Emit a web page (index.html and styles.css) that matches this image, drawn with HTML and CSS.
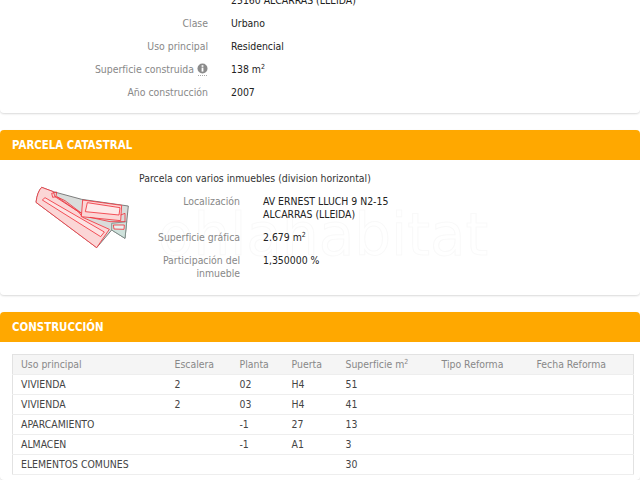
FILE: index.html
```html
<!DOCTYPE html>
<html lang="es">
<head>
<meta charset="utf-8">
<title>Ficha catastral</title>
<link rel="stylesheet" href="styles.css">
</head>
<body>
<main class="page">
  <section class="card first">
    <dl class="rows">
      <div class="row"><dt></dt><dd>25160 ALCARRAS (LLEIDA)</dd></div>
      <div class="row"><dt>Clase</dt><dd>Urbano</dd></div>
      <div class="row"><dt>Uso principal</dt><dd>Residencial</dd></div>
      <div class="row"><dt>Superficie construida <svg class="info" width="11" height="13" viewBox="0 0 11 13"><circle cx="5.5" cy="5.5" r="5" fill="#8b8b8b"/><rect x="4.6" y="4.6" width="1.8" height="4" fill="#fff"/><rect x="4.6" y="2.2" width="1.8" height="1.6" fill="#fff"/><path d="M1 12.5h9" stroke="#aaa" stroke-dasharray="1 1"/></svg></dt><dd>138 m<sup>2</sup></dd></div>
      <div class="row"><dt>Año construcción</dt><dd>2007</dd></div>
    </dl>
  </section>

  <section class="card">
    <h2 class="head">PARCELA CATASTRAL</h2>
    <div class="parcel">
      <span class="mark">ohlahabitat</span>
      <svg class="plot" width="129" height="90" viewBox="0 0 387 270">
        <g stroke-width="2.5" stroke-linejoin="round">
          <path d="M95 52 L130 65 L215 88 L355 108 L345 205 L305 180 L260 233 L78 97 Q82 65 95 52Z" fill="#d9dcda" stroke="#666"/>
          <path d="M305 160 L350 155 L345 205 L305 180Z" fill="#cfe2dc" stroke="#7a8a86"/>
          <path d="M95 52 L130 65 L135 80 L205 125 L218 142 L298 178 L260 233 L78 97 Q82 65 95 52Z" fill="#fbd6d6" stroke="#f0323c"/>
          <path d="M97 90 L105 83 L283 186 L272 200Z" fill="#fde3e3" stroke="#f0323c"/>
          <path d="M125 70 L140 66 L138 80 L128 82Z" fill="none" stroke="#f0323c"/>
          <path d="M140 80 L165 92 L215 130 L205 125Z" fill="none" stroke="#f0323c"/>
          <path d="M218 90 L335 106 L332 152 L214 140Z" fill="#fbd6d6" stroke="#f0323c"/>
          <path d="M232 98 L330 113 L327 135 L226 125Z" fill="#fde9e9" stroke="#f0323c"/>
          <path d="M240 142 L300 155 L345 155 L345 130 L332 135" fill="none" stroke="#f0323c"/>
          <path d="M310 165 L343 165 L342 178 L312 177Z" fill="#e6f3f1" stroke="#f0323c"/>
        </g>
      </svg>
      <div class="parcel-info">
        <p class="lead">Parcela con varios inmuebles (division horizontal)</p>
        <dl class="rows tight">
          <div class="row"><dt>Localización</dt><dd>AV ERNEST LLUCH 9 N2-15<br>ALCARRAS (LLEIDA)</dd></div>
          <div class="row"><dt>Superficie gráfica</dt><dd>2.679 m<sup>2</sup></dd></div>
          <div class="row"><dt>Participación del inmueble</dt><dd>1,350000 %</dd></div>
        </dl>
      </div>
    </div>
  </section>

  <section class="card">
    <h2 class="head">CONSTRUCCIÓN</h2>
    <div class="table-wrap">
      <table>
        <colgroup><col class="c1"><col class="c2"><col class="c3"><col class="c4"><col class="c5"><col class="c6"><col class="c7"></colgroup>
        <thead><tr><th>Uso principal</th><th>Escalera</th><th>Planta</th><th>Puerta</th><th>Superficie m<sup>2</sup></th><th>Tipo Reforma</th><th>Fecha Reforma</th></tr></thead>
        <tbody>
          <tr><td>VIVIENDA</td><td>2</td><td>02</td><td>H4</td><td>51</td><td></td><td></td></tr>
          <tr><td>VIVIENDA</td><td>2</td><td>03</td><td>H4</td><td>41</td><td></td><td></td></tr>
          <tr><td>APARCAMIENTO</td><td></td><td>-1</td><td>27</td><td>13</td><td></td><td></td></tr>
          <tr><td>ALMACEN</td><td></td><td>-1</td><td>A1</td><td>3</td><td></td><td></td></tr>
          <tr><td>ELEMENTOS COMUNES</td><td></td><td></td><td></td><td>30</td><td></td><td></td></tr>
        </tbody>
      </table>
    </div>
  </section>
</main>
</body>
</html>
```
FILE: styles.css
```css
html, body { margin: 0; padding: 0; height: 480px; overflow: hidden; background: #fff; }
body { font-family: "DejaVu Sans", sans-serif; font-stretch: condensed; font-size: 10.4px; color: #333; }
.page { display: flex; flex-direction: column; gap: 17px; margin-top: -11px; }
.card { background: #fff; border-radius: 4px; box-shadow: 0 1px 2px rgba(0,0,0,.15); }
.first { padding-bottom: 9px; }
.rows { margin: 0; display: flex; flex-direction: column; }
.row { display: flex; gap: 23px; height: 23px; line-height: 23px; }
.row dt { width: 208px; text-align: right; color: #888; flex: none; }
.row dd { margin: 0; color: #222; }
sup { font-size: 7px; line-height: 0; vertical-align: 4px; }
.info { vertical-align: -3px; }
.head { margin: 0; height: 30px; line-height: 30px; padding-left: 12px; background: #ffa800; color: #fff; font-size: 11.4px; font-weight: bold; border-radius: 4px 4px 0 0; }
.parcel { position: relative; display: flex; height: 135px; }
.mark { position: absolute; left: 158px; top: 40px; font-size: 58px; line-height: 70px; font-stretch: normal; color: #fff; -webkit-text-stroke: 1px #f9f9f9; }
.plot { flex: none; margin: 10px 0 0 10px; }
.parcel-info { position: relative; }
.lead { margin: 12px 0 0; line-height: 13px; }
.tight { margin-top: 10px; }
.tight .row { height: auto; line-height: 13px; padding-bottom: 10px; }
.tight .row dt { width: 101px; }
.table-wrap { padding: 12px 6px 5px 12px; }
table { width: 622px; border-collapse: collapse; table-layout: fixed; border: 1px solid #e2e2e2; }
.c1 { width: 154px; } .c2 { width: 65px; } .c3 { width: 52px; } .c4 { width: 54px; } .c5 { width: 96px; } .c6 { width: 95px; }
th, td { height: 19px; padding: 0 0 0 8px; text-align: left; font-weight: normal; border-bottom: 1px solid #eee; line-height: 19px; color: #444; }
th { background: #f5f5f5; color: #888; }
```
